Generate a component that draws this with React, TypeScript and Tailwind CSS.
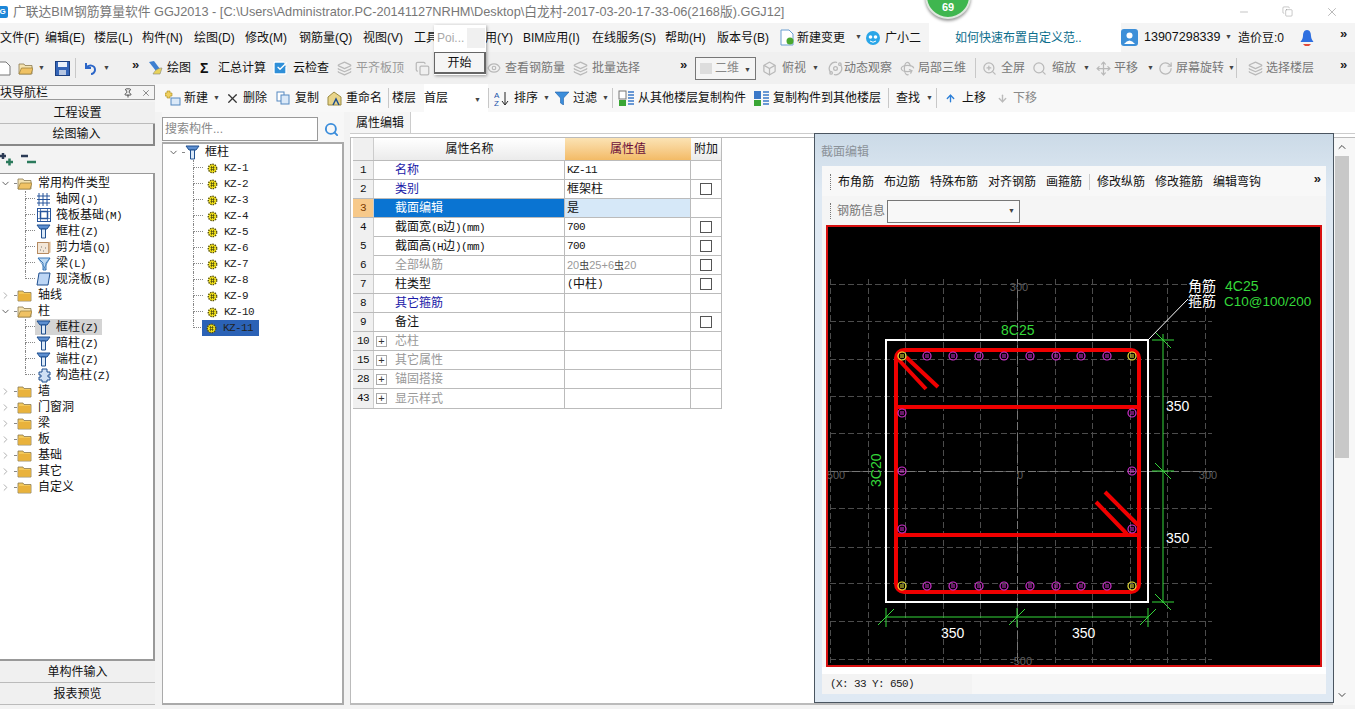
import React from "react";
import { Layers, Box, Orbit, Rotate3d, ZoomIn, Search, Move, RotateCw, Copy, Eye, CheckSquare, ChevronUp, ChevronDown, ChevronRight, X, Minus, Pin, ArrowUp, ArrowDown } from "lucide-react";

const CJK = '"Liberation Sans","Noto Sans CJK SC",sans-serif';

function Sim({ t }: { t: string }) {
  const parts = t.split(/([\u4e00-\u9fff]+)/).filter(Boolean);
  return (
    <>
      {parts.map((p, i) =>
        /[\u4e00-\u9fff]/.test(p) ? (
          <span key={i} className="text-[12px]">{p}</span>
        ) : (
          <span key={i} className="font-['Liberation_Mono'] text-[11px] tracking-[-0.6px]">{p}</span>
        )
      )}
    </>
  );
}

const B = ({ c, children }: { c: string; children?: React.ReactNode }) => (
  <div className={"flex h-full shrink-0 items-center whitespace-nowrap " + c}>{children}</div>
);

const Caret = () => <span className="text-[7px] text-[#444]">▼</span>;
const More = () => <span className="text-[13px] font-bold leading-none text-[#222]">»</span>;
const Sep = () => <div className="h-[20px] w-px bg-[#c8c8c8]" />;

const Column = ({ s = 15 }: { s?: number }) => (
  <svg width={s} height={s} viewBox="0 0 15 15">
    <path d="M1 1h13l-3 4H4z" fill="#5d8fd0" stroke="#1f4f8f" strokeWidth="1" />
    <path d="M5.5 5h4v9h-4z" fill="#dbe9f8" stroke="#1f4f8f" strokeWidth="1" />
  </svg>
);
const Gear = () => (
  <svg width="11" height="11" viewBox="0 0 11 11">
    <circle cx="5.5" cy="5.5" r="4.2" fill="#f4e21a" stroke="#56500a" strokeWidth="1.4" strokeDasharray="1.4 1" />
    <path d="M3.5 4.5h4M3.5 6.5h4M4.5 3v5M6.5 3v5" stroke="#4a4a10" strokeWidth="0.7" />
  </svg>
);
const Folder = ({ open }: { open?: boolean }) => (
  <svg width="15" height="13" viewBox="0 0 15 13">
    <path d="M1 2h5l1 1.5h7V12H1z" fill={open ? "#f5e3b0" : "#f3c85a"} stroke="#8a7a50" strokeWidth="0.8" />
    {open ? <path d="M3.5 6H15l-2 6H1z" fill="#f0c264" stroke="#a08440" strokeWidth="0.8" /> : <path d="M1.5 5h12v6.5h-12z" fill="#e9b23c" />}
  </svg>
);
const Chev = ({ open }: { open?: boolean }) =>
  open ? <ChevronDown size={11} strokeWidth={2} color="#555" /> : <ChevronRight size={11} strokeWidth={2} color="#a8a8a8" />;

const Conn = ({ last }: { last?: boolean }) => (
  <div className="flex h-4 w-[10px] shrink-0 flex-col">
    <div className="h-[8px] border-b border-l border-dotted border-[#888]" />
    {!last && <div className="h-[8px] border-l border-dotted border-[#888]" />}
  </div>
);

const FolderRow = ({ t, open }: { t: string; open?: boolean }) => (
  <div className="flex h-4 items-center">
    <div className="flex w-[11px] justify-center"><Chev open={open} /></div>
    <div className="mr-[1px] ml-[3px] w-[2px] border-b border-dotted border-[#888]" />
    <Folder open={open} />
    <span className="ml-[6px] text-[12px] text-[#111]">{t}</span>
  </div>
);

const Child = ({ t, icon, last, sel }: { t: string; icon: React.ReactNode; last?: boolean; sel?: boolean }) => (
  <div className="flex h-4 items-center pl-[25px]">
    <Conn last={last} />
    <div className={"flex h-4 items-center pl-[1px] pr-1 " + (sel ? "bg-[#d4d4d4]" : "")}>
      <div className="flex w-[15px] justify-center">{icon}</div>
      <span className="ml-[5px] text-[#111]"><Sim t={t} /></span>
    </div>
  </div>
);

const GridIc = () => (
  <svg width="15" height="13" viewBox="0 0 15 13" stroke="#27549b" strokeWidth="1" fill="none">
    <path d="M1 3h13M1 6.5h13M1 10h13M3 0v13M7 0v13M11 0v13" />
  </svg>
);
const RaftIc = () => (
  <svg width="14" height="14" viewBox="0 0 14 14" fill="none" stroke="#27549b">
    <rect x="0.5" y="0.5" width="13" height="13" strokeWidth="1" />
    <rect x="3.5" y="3.5" width="7" height="7" strokeWidth="1.5" />
    <path d="M1 3.5h12M1 10.5h12M3.5 1v12M10.5 1v12" strokeWidth="0.7" />
  </svg>
);
const WallIc = () => (
  <svg width="14" height="13" viewBox="0 0 14 13">
    <rect x="0.5" y="1.5" width="11" height="11" fill="#f3e7d8" stroke="#b58a60" />
    <path d="M11.5 1.5l2-1v11l-2 1z" fill="#d9b48c" />
    <path d="M3 9h1M6 10h1M8 7h1M4 6h1" stroke="#777" />
  </svg>
);
const BeamIc = () => (
  <svg width="14" height="15" viewBox="0 0 14 15">
    <path d="M1 2h12L9 7v7H6V7z" fill="#bcd9f3" stroke="#3a78b8" />
    <path d="M1 2l8 12M13 2L6 14" stroke="#3a78b8" strokeWidth="0.7" />
  </svg>
);
const SlabIc = () => (
  <svg width="15" height="14" viewBox="0 0 15 14">
    <path d="M3 1h11l-2 12H1z" fill="#bdd6f5" stroke="#1f4f8f" />
  </svg>
);
const StructIc = () => (
  <svg width="14" height="15" viewBox="0 0 14 15">
    <path d="M5 1h5v3h3v3h-2v2h2v3h-3v2H5v-2H2V9h2V7H2V4h3z" fill="#cfe0f4" stroke="#1f4f8f" />
  </svg>
);

const NavBtn = ({ t, c }: { t: string; c: string }) => (
  <div className={"flex h-[22px] w-[155px] items-center justify-center bg-[#f0f0f0] text-[12px] text-[#111] " + c}>{t}</div>
);

const rows: { n: string; name: string; v?: React.ReactNode; chk?: boolean; nc: string; plus?: boolean; sel?: boolean }[] = [
  { n: "1", name: "名称", v: <Sim t="KZ-11" />, nc: "text-[#1a1aa8]" },
  { n: "2", name: "类别", v: <Sim t="框架柱" />, chk: true, nc: "text-[#1a1aa8]" },
  { n: "3", name: "截面编辑", v: <Sim t="是" />, nc: "text-white", sel: true },
  { n: "4", name: "截面宽(B边)(mm)", v: <Sim t="700" />, chk: true, nc: "text-[#111]" },
  { n: "5", name: "截面高(H边)(mm)", v: <Sim t="700" />, chk: true, nc: "text-[#111]" },
  { n: "6", name: "全部纵筋", v: <span className="text-[11px] text-[#999]">20<span className="text-[10px] text-[#444]">虫</span>25+6<span className="text-[10px] text-[#444]">虫</span>20</span>, chk: true, nc: "text-[#999]" },
  { n: "7", name: "柱类型", v: <Sim t="(中柱)" />, chk: true, nc: "text-[#111]" },
  { n: "8", name: "其它箍筋", nc: "text-[#1a1aa8]" },
  { n: "9", name: "备注", chk: true, nc: "text-[#111]" },
  { n: "10", name: "芯柱", nc: "text-[#999]", plus: true },
  { n: "15", name: "其它属性", nc: "text-[#999]", plus: true },
  { n: "28", name: "锚固搭接", nc: "text-[#999]", plus: true },
  { n: "43", name: "显示样式", nc: "text-[#999]", plus: true },
];

const PropTable = () => (
  <div className="ml-[2px] w-[369px] border-b border-[#bbb] text-[#111]">
    <div className="grid h-[23px] grid-cols-[21px_191px_126px_31px] border-b border-[#bbb] text-[12px]">
      <div className="border-r border-[#ccc] bg-[#f0f0f0]" />
      <div className="flex items-center justify-center bg-gradient-to-b from-white to-[#ebebeb]">属性名称</div>
      <div className="flex items-center justify-center bg-gradient-to-b from-[#fbe3b4] to-[#f3bb66] text-[#6b0f3a]">属性值</div>
      <div className="flex items-center justify-center border-r border-[#bbb] bg-gradient-to-b from-white to-[#ebebeb]">附加</div>
    </div>
    {rows.map((r) => (
      <div key={r.n} className="grid h-[19px] grid-cols-[21px_191px_126px_31px] border-b border-[#bbb] last:border-b-0">
        <div className={"flex items-center justify-center border-r border-[#ccc] font-['Liberation_Mono'] text-[11px] tracking-[-0.6px] " + (r.sel ? "bg-[#f7c98a] text-[#7a3a00]" : "bg-[#f0f0f0]")}>{r.n}</div>
        <div className={"flex items-center border-r border-[#bbb] pl-[2px] " + r.nc + (r.sel ? " bg-[#0a74d2]" : "")}>
          <div className="flex w-[18px] justify-start">
            {r.plus && <div className="flex h-[11px] w-[11px] items-center justify-center border border-[#aaa] bg-white text-[11px] leading-none text-[#333]">+</div>}
          </div>
          <span className="ml-[1px]"><Sim t={r.name} /></span>
        </div>
        <div className={"flex items-center border-r border-[#bbb] pl-[2px] " + (r.sel ? "bg-[#d6e8f8]" : "")}>{r.v}</div>
        <div className="flex items-center justify-center border-r border-[#bbb]">
          {r.chk && <div className="h-[12px] w-[12px] border border-[#555] bg-white" />}
        </div>
      </div>
    ))}
  </div>
);

const topX = [902, 927, 953, 979, 1004, 1030, 1056, 1081, 1107, 1132];
const vLines = [830, 868, 905, 943, 980, 1017, 1055, 1092, 1130, 1167, 1205];
const hLines = [285, 322, 360, 397, 434, 472, 509, 548, 584, 622, 660];

const Rebar = ({ x, y, c }: { x: number; y: number; c: string }) => (
  <g>
    <circle cx={x} cy={y} r="4" fill="none" stroke={c} strokeWidth="1.2" />
    <path d={`M${x - 2} ${y - 1}h4M${x - 2} ${y + 1}h4`} stroke={c} strokeWidth="1" />
  </g>
);
const G = "#35d83a";
const Section = () => (
  <svg className="block h-full w-full" viewBox="828 228 492 438" preserveAspectRatio="none">
    <rect x="828" y="228" width="492" height="438" fill="#000" />
    <g stroke="#4c4c4c" strokeWidth="1" strokeDasharray="6 3" shapeRendering="crispEdges">
      {vLines.map((x) => <line key={x} x1={x} x2={x} y1="280" y2="666" />)}
      {hLines.map((y) => <line key={y} y1={y} y2={y} x1="830" x2="1212" />)}
    </g>
    <g stroke="#777" strokeWidth="1" strokeDasharray="8 3" shapeRendering="crispEdges">
      <line x1="1017" x2="1017" y1="280" y2="666" />
      <line x1="830" x2="1212" y1="472" y2="472" />
    </g>
    <g fill="#5e5e5e" fontSize="11" fontFamily="Liberation Sans" textAnchor="middle">
      <text x="1019" y="292">300</text>
      <text x="836" y="480">500</text>
      <text x="1020" y="480">0</text>
      <text x="1208" y="480">300</text>
      <text x="1021" y="666">-500</text>
    </g>
    <rect x="886" y="341" width="262" height="262" fill="none" stroke="#fff" strokeWidth="2" />
    <g stroke="#f00000" fill="none" strokeWidth="4">
      <rect x="896" y="351" width="243" height="242" rx="8" />
      <path d="M897 408H1139M897 536H1139" />
      <path d="M898 360L926 390M906 358L938 388M1096 503L1127 535M1105 493L1138 526" strokeWidth="4" />
    </g>
    {topX.map((x, i) => (
      <React.Fragment key={x}>
        <Rebar x={x} y={357} c={i === 0 || i === 9 ? "#f2ea3a" : "#d030d0"} />
        <Rebar x={x} y={587} c={i === 0 || i === 9 ? "#f2ea3a" : "#d030d0"} />
      </React.Fragment>
    ))}
    {[414, 472, 530].map((y) => (
      <React.Fragment key={y}>
        <Rebar x={902} y={y} c="#d030d0" />
        <Rebar x={1132} y={y} c="#d030d0" />
      </React.Fragment>
    ))}
    <g stroke={G} strokeWidth="1" fill="none">
      <path d="M886 618H1148" />
      {[886, 1017, 1148].map((x) => <path key={x} d={`M${x} 609V628M${x - 8} 626L${x + 8} 610`} />)}
      <path d="M1163 335V604" />
      {[341, 472, 603].map((y) => <path key={y} d={`M1152 ${y}H1174M1155 ${y - 8}L1171 ${y + 8}`} />)}
    </g>
    <path d="M1148 341L1188 300" stroke="#fff" strokeWidth="1" />
    <g fontFamily="Liberation Sans" fontSize="14">
      <text x="1001" y="336" fill={G}>8C25</text>
      <text transform="translate(881 488) rotate(-90)" fill={G}>3C20</text>
      <text x="941" y="639" fill="#fff">350</text>
      <text x="1072" y="639" fill="#fff">350</text>
      <text x="1166" y="412" fill="#fff">350</text>
      <text x="1166" y="544" fill="#fff">350</text>
      <text x="1225" y="292" fill={G}>4C25</text>
      <text x="1224" y="307" fontSize="13.500" fill={G}>C10@100/200</text>
    </g>
    <g fontFamily="Noto Sans CJK SC" fontSize="14" fill="#fff">
      <text x="1188" y="292">角筋</text>
      <text x="1188" y="307">箍筋</text>
    </g>
  </svg>
);

export default function App() {
  const g = "#b9b9b9";
  return (
    <div className="relative flex h-[709px] w-[1355px] flex-col overflow-hidden bg-[#f3f3f3] text-[12px] text-[#111]" style={{ fontFamily: CJK }}>
      {/* title bar */}
      <div className="flex h-[23px] shrink-0 items-center bg-white">
        <div className="ml-[-3px] flex h-[12px] w-[11px] items-center justify-center rounded-[2px] bg-[#1c86d8] text-[8px] font-bold text-white">G</div>
        <span className="ml-[5px] text-[12.75px] text-[#777]">广联达BIM钢筋算量软件 GGJ2013 - [C:\Users\Administrator.PC-20141127NRHM\Desktop\白龙村-2017-03-20-17-33-06(2168版).GGJ12]</span>
        <div className="ml-auto flex items-center">
          <Minus size={12} color="#888" strokeWidth={1} />
          <div className="ml-[32px]"><Copy size={11} color="#888" strokeWidth={1} /></div>
          <div className="mr-[16px] ml-[32px]"><X size={14} color="#888" strokeWidth={1} /></div>
        </div>
      </div>
      {/* menu bar */}
      <div className="flex h-[29px] shrink-0 items-center bg-[#f4f4f4] text-[12px]">
        <B c="w-[45px]">文件(F)</B><B c="w-[49px]">编辑(E)</B><B c="w-[48px]">楼层(L)</B><B c="w-[52px]">构件(N)</B><B c="w-[51px]">绘图(D)</B><B c="w-[54px]">修改(M)</B><B c="w-[64px]">钢筋量(Q)</B><B c="w-[51px]">视图(V)</B>
        <B c="w-[71px]">工具</B><B c="w-[38px]">用(Y)</B><B c="w-[69px]">BIM应用(I)</B><B c="w-[73px]">在线服务(S)</B><B c="w-[52px]">帮助(H)</B><B c="w-[63px]">版本号(B)</B>
        <B c="w-[17px]">
          <svg width="14" height="17" viewBox="0 0 14 17"><path d="M1 1h8l4 4v11H1z" fill="#fff" stroke="#6a9fd0" /><circle cx="10" cy="12" r="3.5" fill="#4aa82e" /></svg>
        </B>
        <B c="w-[58px]">新建变更</B>
        <B c="w-[10px]"><Caret /></B>
        <B c="w-[20px]">
          <svg width="16" height="16" viewBox="0 0 16 16"><circle cx="8" cy="8" r="7" fill="#2aa6e8" /><circle cx="5.5" cy="7" r="1.8" fill="#fff" /><circle cx="10.5" cy="7" r="1.8" fill="#fff" /><path d="M5 11q3 2.5 6 0" stroke="#fff" fill="none" /></svg>
        </B>
        <B c="w-[44px]">广小二</B>
        <div className="flex h-full w-[192px] shrink-0 items-center bg-white pl-[26px] text-[#0b6d8c]">如何快速布置自定义范..</div>
        <B c="w-[23px]">
          <svg width="17" height="17" viewBox="0 0 17 17"><rect width="17" height="17" rx="3" fill="#3d8fd8" /><circle cx="8.500" cy="6.500" r="3" fill="#fff" /><path d="M3 15q5.500-7 11 0z" fill="#fff" /></svg>
        </B>
        <B c="w-[81px] text-[12.5px]">13907298339</B>
        <B c="w-[13px]"><Caret /></B>
        <B c="w-[62px]">造价豆:0</B>
        <B c="w-[40px]">
          <svg width="14" height="18" viewBox="0 0 14 18"><path d="M7 1c3 0 4 3 4 6s2 5 2.500 6H.5C1 12 3 10 3 7s1-6 4-6z" fill="#2f6fe0" /><path d="M3 15h8l-2 2H5z" fill="#e24b3a" /></svg>
        </B>
        <span className="mb-[8px]"><More /></span>
      </div>
      {/* toolbar */}
      <div className="flex h-[32px] shrink-0 items-center bg-[#f0f0f0]">
        <B c="w-[18px]"><svg width="11" height="15" viewBox="0 0 11 15"><path d="M-3 1h9l4 4v9H-3z" fill="#fff" stroke="#777" /></svg></B>
        <B c="w-[20px]"><Folder open /></B>
        <B c="w-[17px]"><Caret /></B>
        <B c="w-[20px]"><svg width="15" height="15" viewBox="0 0 15 15"><rect x=".5" y=".5" width="14" height="14" fill="#3465b8" stroke="#1b3f80" /><rect x="3" y="1" width="9" height="5" fill="#eaf1fb" /><rect x="4" y="9" width="7" height="5" fill="#b7c7e2" /></svg></B>
        <B c="w-[8px]"><Sep /></B>
        <B c="w-[20px]"><svg width="15" height="15" viewBox="0 0 15 15" fill="none"><path d="M3 2v5h5M3 7c3-4 9-3 9 2 0 2-2 4-4 4" stroke="#2c66c8" strokeWidth="2" /></svg></B>
        <B c="w-[29px]"><Caret /></B>
        <B c="w-[15px] pb-2"><More /></B>
        <B c="w-[20px]"><svg width="17" height="17" viewBox="0 0 17 17"><path d="M2 2l7 9 4-2-6-8z" fill="#3d7fd0" /><path d="M6 14c2-4 5-6 9-6l-2 6z" fill="#e8d25a" stroke="#887" strokeWidth=".6" /></svg></B>
        <B c="w-[33px]">绘图</B>
        <B c="w-[18px] text-[14px] font-bold">Σ</B>
        <B c="w-[54px]">汇总计算</B>
        <B c="w-[21px]"><CheckSquare size={16} color="#fff" fill="#2f8fd8" /></B>
        <B c="w-[44px]">云检查</B>
        <B c="w-[19px]"><Layers size={15} color={g} /></B>
        <B c="w-[59px] text-[#999]">平齐板顶</B>
        <B c="w-[72px]"><Copy size={15} color={g} /></B>
        <B c="w-[18px]"><Eye size={14} color={g} /></B>
        <B c="w-[68px] text-[#777]">查看钢筋量</B>
        <B c="w-[19px]"><Layers size={15} color={g} /></B>
        <B c="w-[88px] text-[#777]">批量选择</B>
        <B c="w-[15px] pb-2"><More /></B>
        <B c="w-[61px]">
          <div className="flex h-[23px] w-[61px] items-center border border-[#777] bg-[#f5f5f5] pl-[4px] text-[#888]">
            <span className="h-[11px] w-[12px] bg-[#ddd]" /><span className="ml-[3px]">二维</span><span className="ml-[5px]"><Caret /></span>
          </div>
        </B>
        <B c="w-[6px]" />
        <B c="w-[20px]"><Box size={15} color={g} /></B>
        <B c="w-[30px] text-[#777]">俯视</B>
        <B c="w-[16px]"><Caret /></B>
        <B c="w-[16px]"><Orbit size={15} color={g} /></B>
        <B c="w-[56px] text-[#777]">动态观察</B>
        <B c="w-[18px]"><Rotate3d size={15} color={g} /></B>
        <B c="w-[57px] text-[#777]">局部三维</B>
        <B c="w-[7px]"><Sep /></B>
        <B c="w-[19px]"><ZoomIn size={15} color={g} /></B>
        <B c="w-[31px] text-[#777]">全屏</B>
        <B c="w-[20px]"><Search size={15} color={g} /></B>
        <B c="w-[31px] text-[#777]">缩放</B>
        <B c="w-[13px]"><Caret /></B>
        <B c="w-[18px]"><Move size={15} color={g} /></B>
        <B c="w-[33px] text-[#777]">平移</B>
        <B c="w-[11px]"><Caret /></B>
        <B c="w-[18px]"><RotateCw size={15} color={g} /></B>
        <B c="w-[52px] text-[#777]">屏幕旋转</B>
        <B c="w-[8px]"><Caret /></B>
        <B c="w-[12px]"><Sep /></B>
        <B c="w-[18px]"><Layers size={15} color={g} /></B>
        <B c="w-[74px] text-[#777]">选择楼层</B>
        <B c="pb-2"><More /></B>
      </div>
      {/* body */}
      <div className="flex min-h-0 flex-1">
        {/* left nav */}
        <div className="flex w-[155px] shrink-0 flex-col pt-[1px]">
          <div className="flex h-[15px] items-center justify-between border border-l-0 border-[#999] bg-[#f4f4f4] pr-[3px] pl-0">
            <span className="ml-[-12px] text-[12px]">模块导航栏</span>
            <div className="flex items-center gap-[8px]"><Pin size={10} color="#333" /><X size={10} color="#777" /></div>
          </div>
          <NavBtn t="工程设置" c="mt-[2px] border-b border-[#bbb]" />
          <NavBtn t="绘图输入" c="border-r-2 border-b-2 border-[#888]" />
          <div className="flex h-[27px] items-center pl-0 text-[#222]">
            <svg width="40" height="18" viewBox="0 0 40 18" fill="none">
              <path d="M0 5h6M3 2v6" stroke="#2b3a55" strokeWidth="2.500" />
              <path d="M6 11h7M9.500 7.500v7" stroke="#2b7a5c" strokeWidth="2.500" />
              <path d="M21 5h7" stroke="#2b3a55" strokeWidth="2.500" />
              <path d="M27 11h9" stroke="#2b7a5c" strokeWidth="2.500" />
            </svg>
          </div>
          <div className="min-h-0 flex-1 border-t border-r-2 border-b-2 border-[#999] bg-white pt-[1px]">
            <FolderRow t="常用构件类型" open />
            <Child t="轴网(J)" icon={<GridIc />} />
            <Child t="筏板基础(M)" icon={<RaftIc />} />
            <Child t="框柱(Z)" icon={<Column />} />
            <Child t="剪力墙(Q)" icon={<WallIc />} />
            <Child t="梁(L)" icon={<BeamIc />} />
            <Child t="现浇板(B)" icon={<SlabIc />} last />
            <FolderRow t="轴线" />
            <FolderRow t="柱" open />
            <Child t="框柱(Z)" icon={<Column />} sel />
            <Child t="暗柱(Z)" icon={<Column />} />
            <Child t="端柱(Z)" icon={<Column />} />
            <Child t="构造柱(Z)" icon={<StructIc />} last />
            {["墙", "门窗洞", "梁", "板", "基础", "其它", "自定义"].map((t) => <FolderRow key={t} t={t} />)}
          </div>
          <NavBtn t="单构件输入" c="border-b border-[#bbb]" />
          <NavBtn t="报表预览" c="border-b border-[#bbb] mb-[4px]" />
        </div>
        {/* right of nav */}
        <div className="flex min-w-0 flex-1 flex-col">
          <div className="flex h-[28px] shrink-0 items-center bg-[#f8f8f8]">
            <B c="w-[10px]" />
            <B c="w-[19px]"><svg width="16" height="16" viewBox="0 0 16 16"><path d="M2 1h3v2h2v3H5v2H2V6H0V3h2z" fill="#f0d060" stroke="#a88a20" strokeWidth=".6" /><rect x="6" y="8" width="9" height="7" fill="#dbe9f8" stroke="#5588c0" /></svg></B>
            <B c="w-[29px]">新建</B><B c="w-[12px]"><Caret /></B>
            <B c="w-[18px]"><X size={15} color="#333" strokeWidth={2} /></B>
            <B c="w-[33px]">删除</B>
            <B c="w-[19px]"><svg width="14" height="14" viewBox="0 0 14 14"><rect x="1" y="1" width="7" height="9" fill="#fff" stroke="#5588c0" /><rect x="5" y="4" width="8" height="9" fill="#dbe9f8" stroke="#5588c0" /></svg></B>
            <B c="w-[31px]">复制</B>
            <B c="w-[20px]"><svg width="17" height="17" viewBox="0 0 17 17"><path d="M2 7l6-5 7 5v8H2z" fill="#e8d48a" stroke="#9a8a40" /><path d="M7 15l3-6 3 6" stroke="#1f4f8f" fill="none" strokeWidth="1.500" /></svg></B>
            <B c="w-[42px]">重命名</B>
            <B c="w-[4px]"><Sep /></B>
            <B c="w-[32px]">楼层</B>
            <B c="w-[64px] bg-white pl-[0px] h-[22px]">首层<span className="ml-auto mr-[7px]"><Caret /></span></B>
            <B c="w-[6px]"><Sep /></B>
            <B c="w-[20px]"><svg width="15" height="15" viewBox="0 0 15 15"><text x="0" y="7" fontSize="8" fill="#2255aa" fontFamily="Liberation Sans">A</text><text x="0" y="15" fontSize="8" fill="#2255aa" fontFamily="Liberation Sans">Z</text><path d="M11 1v12M8 10l3 4 3-4" stroke="#222" fill="none" /></svg></B>
            <B c="w-[29px]">排序</B><B c="w-[12px]"><Caret /></B>
            <B c="w-[18px]"><svg width="14" height="14" viewBox="0 0 14 14"><path d="M0 1h14L8.500 7v7l-3-2V7z" fill="#3b8ddb" stroke="#1f5fa8" strokeWidth=".6" /></svg></B>
            <B c="w-[29px]">过滤</B><B c="w-[10px]"><Caret /></B>
            <B c="w-[6px]"><Sep /></B>
            <B c="w-[20px]"><svg width="17" height="17" viewBox="0 0 17 17"><rect x="1" y="1" width="7" height="8" fill="#fff" stroke="#777" /><rect x="1" y="10" width="7" height="6" fill="#3aa635" /><path d="M10 2h6M10 5h6M10 8h6M10 11h6M10 14h6" stroke="#3a78c8" strokeWidth="1.600" /></svg></B>
            <B c="w-[115px]">从其他楼层复制构件</B>
            <B c="w-[20px]"><svg width="17" height="17" viewBox="0 0 17 17"><rect x="1" y="1" width="7" height="8" fill="#3a78c8" /><rect x="1" y="10" width="7" height="6" fill="#3aa635" /><path d="M10 2h6M10 5h6M10 8h6M10 11h6M10 14h6" stroke="#3a78c8" strokeWidth="1.600" /></svg></B>
            <B c="w-[115px]">复制构件到其他楼层</B>
            <B c="w-[8px]"><Sep /></B>
            <B c="w-[30px]">查找</B><B c="w-[10px]"><Caret /></B>
            <B c="w-[9px]"><Sep /></B>
            <B c="w-[17px]"><ArrowUp size={11} color="#2c7fd8" strokeWidth={3} /></B>
            <B c="w-[35px]">上移</B>
            <B c="w-[16px]"><ArrowDown size={11} color="#bbb" strokeWidth={3} /></B>
            <B c="text-[#888]">下移</B>
          </div>
          <div className="flex min-h-0 flex-1 pb-[4px]">
            {/* component tree */}
            <div className="ml-[7px] flex w-[182px] shrink-0 flex-col">
              <div className="flex h-[30px] shrink-0 bg-[#f7f7f7] pt-[5px]">
                <div className="flex h-[24px] w-[156px] items-center border border-[#999] bg-white pl-[2px] text-[#888]">搜索构件...</div>
                <div className="flex h-[24px] w-[26px] items-center justify-center"><Search size={15} color="#3b8ddb" strokeWidth={3} /></div>
              </div>
              <div className="min-h-0 flex-1 border-t-2 border-r-2 border-b-2 border-l border-[#aaa] bg-white">
                <div className="flex h-4 items-center pl-[5px]">
                  <Chev open /><div className="ml-[3px] w-[2px] border-b border-dotted border-[#888]" />
                  <div className="ml-[1px]"><Column /></div>
                  <span className="ml-[5px]">框柱</span>
                </div>
                {Array.from({ length: 11 }, (_, i) => (
                  <div key={i} className="flex h-4 items-center pl-[30px]">
                    <Conn last={i === 10} />
                    <div className={"flex h-4 items-center pl-[4px] " + (i === 10 ? "w-[57px] ml-[-1px] bg-[#2b62b6]" : "")}>
                      <Gear />
                      <span className="ml-[6px] font-['Liberation_Mono'] text-[11px] tracking-[-0.6px] text-[#222]">KZ-{i + 1}</span>
                    </div>
                  </div>
                ))}
              </div>
            </div>
            {/* properties */}
            <div className="ml-[6px] flex min-w-0 flex-1 flex-col bg-white">
              <div className="flex h-[22px] shrink-0 items-end border-b border-[#ccc] bg-white">
                <div className="flex h-[21px] w-[61px] items-center justify-center border-r border-[#ccc] bg-[#f5f5f5]">属性编辑</div>
              </div>
              <div className="flex min-h-0 flex-1 pt-[3px]">
                <div className="min-w-0 flex-1 border-t border-l border-[#bbb] border-b-2 bg-white">
                  <PropTable />
                </div>
                <div className="flex w-[22px] shrink-0 flex-col items-center border-t border-[#bbb] bg-[#f7f7f7] pr-[5px]">
                  <div className="flex h-[17px] items-center"><ChevronUp size={12} color="#444" strokeWidth={2} /></div>
                  <div className="mt-[1px] h-[302px] w-[14px] bg-[#c8c8c8]" />
                  <div className="mt-auto mb-[4px]"><ChevronDown size={12} color="#444" strokeWidth={2} /></div>
                </div>
              </div>
            </div>
          </div>
        </div>
      </div>

      {/* floating section editor window */}
      <div className="absolute top-[133px] left-[814px] flex h-[570px] w-[520px] flex-col border border-[#4a5560] bg-gradient-to-b from-[#cbdae7] to-[#dfe9f3] to-10% px-[7px]">
        <div className="ml-[-1px] flex h-[32px] shrink-0 items-center pt-[4px] text-[12px] text-[#8b9299]">截面编辑</div>
        <div className="flex min-h-0 flex-1 flex-col bg-[#f5f5f5]">
          <div className="flex h-[30px] shrink-0 items-center bg-[#f8f8f8] pt-[2px] pr-[5px] pl-[8px]">
            <div className="mr-[7px] h-[16px] border-l border-dotted border-[#777]" />
            {["布角筋", "布边筋", "特殊布筋", "对齐钢筋", "画箍筋"].map((t) => <span key={t} className="mr-[10px]">{t}</span>)}
            <div className="mr-[7px] ml-[-3px]"><div className="h-[16px] w-px bg-[#ccc]" /></div>
            {["修改纵筋", "修改箍筋", "编辑弯钩"].map((t) => <span key={t} className="mr-[10px]">{t}</span>)}
            <span className="mb-[7px] ml-auto"><More /></span>
          </div>
          <div className="flex h-[29px] shrink-0 items-center pt-[1px] pl-[8px]">
            <div className="mr-[6px] h-[16px] border-l border-dotted border-[#777]" />
            <span className="text-[#777]">钢筋信息</span>
            <div className="ml-[2px] flex h-[23px] w-[133px] items-center justify-end border border-[#777] bg-[#f8f8f8] pr-[4px]"><Caret /></div>
          </div>
          <div className="mx-[4px] min-h-0 flex-1 border-2 border-[#d81010] bg-black"><Section /></div>
          <div className="h-[7px] shrink-0 bg-white" />
        </div>
        <div className="flex h-[20px] shrink-0 items-center gap-[3px] bg-[#f3f3f3]">
          <div className="flex h-full w-[147px] items-center pt-[1px] pl-[8px] font-['Liberation_Mono'] text-[11px] tracking-[-0.6px] text-[#222]">(X: 33 Y: 650)</div>
          <div className="h-full flex-1 bg-[#f7f7f7]" />
        </div>
        <div className="h-[8px] shrink-0" />
      </div>

      {/* popup */}
      <div className="absolute top-[25px] left-[434px] flex h-[50px] w-[52px] flex-col bg-white shadow-[1px_1px_3px_rgba(0,0,0,0.35)]">
        <div className="flex h-[25px] items-center pl-[3px] text-[#aaa]">
          Poi...
          <span className="mr-[1px] ml-auto h-[20px] w-[18px] bg-[#f0f0f0]" />
        </div>
        <div className="mt-[2px] flex h-[22px] items-center justify-center border-t border-r-2 border-b-2 border-l border-[#666] bg-[#f5f5f5]">开始</div>
      </div>

      {/* green badge */}
      <div className="absolute top-[-27px] left-[925px] flex h-[46px] w-[46px] items-end justify-center rounded-full border-2 border-[#dfe8df] bg-[#3fb64f] pb-[2px] font-['Liberation_Sans'] text-[11px] font-bold text-white shadow-[0_2px_3px_rgba(0,0,0,0.4)]">69</div>
    </div>
  );
}
